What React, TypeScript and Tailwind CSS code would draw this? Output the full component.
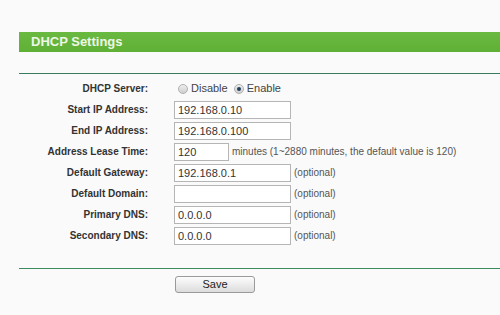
import React from 'react'

type Row = {
  label: string
  value?: string
  width?: string
  hint?: string
}

const rows: Row[] = [
  { label: 'Start IP Address:', value: '192.168.0.10' },
  { label: 'End IP Address:', value: '192.168.0.100' },
  {
    label: 'Address Lease Time:',
    value: '120',
    width: 'w-[55px]',
    hint: 'minutes (1~2880 minutes, the default value is 120)',
  },
  { label: 'Default Gateway:', value: '192.168.0.1', hint: '(optional)' },
  { label: 'Default Domain:', value: '', hint: '(optional)' },
  { label: 'Primary DNS:', value: '0.0.0.0', hint: '(optional)' },
  { label: 'Secondary DNS:', value: '0.0.0.0', hint: '(optional)' },
]

function Label({ children }: { children: React.ReactNode }) {
  return (
    <div className="w-[129px] shrink-0 text-right text-[10px] font-bold text-[#333]">
      {children}
    </div>
  )
}

function Radio({ checked }: { checked?: boolean }) {
  return (
    <span className="flex h-[10px] w-[10px] items-center justify-center rounded-full border border-[#b0b0b0] bg-gradient-to-b from-[#eeeeee] to-[#cfcfcf]">
      {checked && <span className="h-[4px] w-[4px] rounded-full bg-[#23405f]" />}
    </span>
  )
}

export default function App() {
  return (
    <div className="min-h-[315px] w-[500px] bg-[#fafafa] pl-[19px] pt-[32px] font-['Liberation_Sans',Arial,sans-serif]">
      {/* Title bar */}
      <div className="flex h-[20px] items-center bg-gradient-to-b from-[#6aba42] to-[#5fb035] pl-3 text-[13px] font-bold text-[#eef7e6]">
        DHCP Settings
      </div>

      <div className="mt-[21px] h-px bg-[#3a7c5c]" />

      <div className="mt-[4px]">
        <div className="flex h-[21px] items-center">
          <Label>DHCP Server:</Label>
          <div className="ml-[30px] flex items-center text-[11px] text-[#444]">
            <Radio />
            <span className="ml-[3px]">Disable</span>
            <span className="ml-[6px]">
              <Radio checked />
            </span>
            <span className="ml-[3px]">Enable</span>
          </div>
        </div>

        {rows.map((r) => (
          <div key={r.label} className="flex h-[21px] items-center">
            <Label>{r.label}</Label>
            <input
              readOnly
              value={r.value}
              className={`ml-[26px] h-[18px] ${r.width ?? 'w-[117px]'} border border-[#b5b5b5] bg-white px-[3px] text-[11px] text-[#333] outline-none`}
            />
            {r.hint && (
              <span className="ml-[3px] text-[10px] text-[#555]">{r.hint}</span>
            )}
          </div>
        ))}
      </div>

      <div className="mt-[22px] h-px bg-[#3a8a5e]" />

      <div className="mt-[7px] flex pl-[156px]">
        <button className="flex h-[17px] w-[80px] items-center justify-center rounded-[3px] border border-[#9a9a9a] bg-gradient-to-b from-[#fdfdfd] to-[#dcdcdc] text-[11px] leading-none text-[#222]">
          Save
        </button>
      </div>
    </div>
  )
}
